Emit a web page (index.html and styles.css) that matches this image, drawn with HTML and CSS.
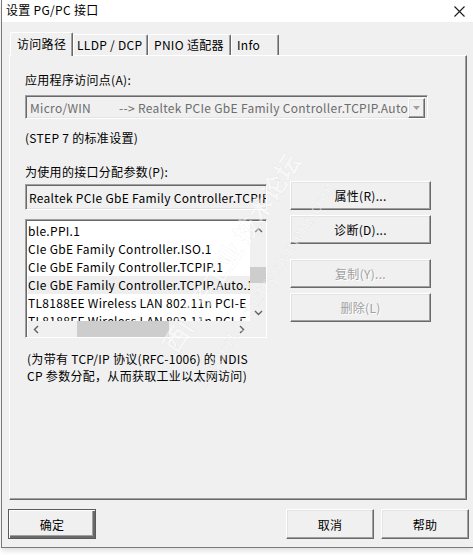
FILE: index.html
```html
<!DOCTYPE html>
<html lang="zh-CN">
<head>
<meta charset="utf-8">
<title>设置 PG/PC 接口</title>
<link rel="stylesheet" href="styles.css">
</head>
<body>
<div class="window">
  <div class="titlebar">
    <span class="title">设置 PG/PC 接口</span>
    <svg class="close" width="11" height="11" viewBox="0 0 11 11"><path d="M0.5 0.5 L10.5 10.5 M10.5 0.5 L0.5 10.5" stroke="#1a1a1a" stroke-width="1.1" fill="none"/></svg>
  </div>
  <div class="tabs">
    <div class="tab tab-active">访问路径</div>
    <div class="tab tab-lldp">LLDP / DCP</div>
    <div class="tab tab-pnio">PNIO 适配器</div>
    <div class="tab tab-info">Info</div>
  </div>
  <div class="panel">
    <div class="label">应用程序访问点(A):</div>
    <div class="combo sunken">
      <div class="combo-text"><span class="combo-a">Micro/WIN</span>--&gt; Realtek PCIe GbE Family Controller.TCPIP.Auto.1</div>
      <div class="combo-btn raised">
        <svg width="7" height="4" viewBox="0 0 7 4"><path d="M0 0 H7 L3.5 4 Z" fill="#a0a0a0"/></svg>
      </div>
    </div>
    <div class="label label-step">(STEP 7 的标准设置)</div>
    <div class="label label-param">为使用的接口分配参数(P):</div>
    <div class="params">
      <div class="params-left">
        <div class="textbox sunken">Realtek PCIe GbE Family Controller.TCPIP.Auto.1</div>
        <div class="list sunken">
          <div class="list-items">
            <div class="item">ble.PPI.1</div>
            <div class="item">CIe GbE Family Controller.ISO.1</div>
            <div class="item">CIe GbE Family Controller.TCPIP.1</div>
            <div class="item item-selected">CIe GbE Family Controller.TCPIP.Auto.1</div>
            <div class="item">TL8188EE Wireless LAN 802.11n PCI-E NIC.TCPIP.1</div>
            <div class="item">TL8188EE Wireless LAN 802.11n PCI-E NIC.TCPIP.Auto.1</div>
          </div>
          <div class="vscroll">
            <div class="sb-btn"><svg width="9" height="6" viewBox="0 0 9 6"><path d="M1 5 L4.5 1.5 L8 5" stroke="#606060" stroke-width="1.4" fill="none"/></svg></div>
            <div class="vtrack"><div class="vthumb"></div></div>
            <div class="sb-btn"><svg width="9" height="6" viewBox="0 0 9 6"><path d="M1 1 L4.5 4.5 L8 1" stroke="#606060" stroke-width="1.4" fill="none"/></svg></div>
          </div>
          <div class="hscroll">
            <div class="sb-btn"><svg width="6" height="9" viewBox="0 0 6 9"><path d="M5 1 L1.5 4.5 L5 8" stroke="#606060" stroke-width="1.4" fill="none"/></svg></div>
            <div class="htrack"><div class="hthumb"></div></div>
            <div class="sb-btn"><svg width="6" height="9" viewBox="0 0 6 9"><path d="M1 1 L4.5 4.5 L1 8" stroke="#606060" stroke-width="1.4" fill="none"/></svg></div>
          </div>
          <div class="corner"></div>
        </div>
      </div>
      <div class="params-right">
        <div class="btn raised btn-side">属性(R)...</div>
        <div class="btn raised btn-side gap-s">诊断(D)...</div>
        <div class="btn raised btn-side gap-l disabled">复制(Y)...</div>
        <div class="btn raised btn-side gap-s disabled">删除(L)</div>
      </div>
    </div>
    <div class="note">
      <div>(为带有 TCP/IP 协议(RFC-1006) 的 NDIS</div>
      <div>CP 参数分配，从而获取工业以太网访问)</div>
    </div>
  </div>
  <div class="footer">
    <div class="btn raised btn-foot btn-default">确定</div>
    <div class="btn raised btn-foot btn-cancel">取消</div>
    <div class="btn raised btn-foot btn-help">帮助</div>
  </div>
  <div class="watermark wm-big">西门子工业 技术论坛</div>
  <div class="watermark wm-url">support.industry.siemens.com</div>
</div>
</body>
</html>
```
FILE: styles.css
```css
* { box-sizing: border-box; }
html, body { margin: 0; padding: 0; background: #ffffff; }
body {
  width: 473px;
  height: 555px;
  overflow: hidden;
  font-family: "Noto Sans CJK SC", "Noto Sans", sans-serif;
  font-size: 12px;
  letter-spacing: 0.3px;
  color: #000;
}
.window {
  position: relative;
  margin-left: 1px;
  width: 472px;
  height: 548px;
  border-left: 1px solid #7a7a7a;
  border-bottom: 1px solid #7a7a7a;
  background: #f0f0f0;
  box-shadow: 0 3px 5px rgba(0,0,0,0.12);
}
.titlebar {
  height: 22px;
  background: #ffffff;
  display: flex;
  align-items: center;
  justify-content: space-between;
  padding: 0 8px 2px 4px;
}
.title { font-size: 12px; line-height: 18px; color: #000; }
.close { display: block; margin-top: 2px; }

.tabs {
  height: 33px;
  display: flex;
  align-items: flex-end;
  padding-left: 8px;
}
.tab {
  height: 21px;
  line-height: 19px;
  border-top: 1px solid #ffffff;
  border-left: 1px solid #ffffff;
  border-right: 1px solid #696969;
  box-shadow: inset -1px 0 #a0a0a0;
  border-radius: 2px 2px 0 0;
  white-space: nowrap;
  padding-left: 5px;
  background: #f0f0f0;
}
.tab-active {
  position: relative;
  z-index: 1;
  width: 63px;
  height: 24px;
  line-height: 21px;
  margin-bottom: -1px;
  padding-left: 6px;
}
.tab-lldp { width: 75px; padding-left: 3px; }
.tab-pnio { width: 83px; padding-left: 5px; }
.tab-info { width: 48px; padding-left: 5px; }

.panel {
  margin-left: 7px;
  width: 458px;
  height: 445px;
  border-top: 1px solid #ffffff;
  border-left: 1px solid #ffffff;
  border-right: 1px solid #696969;
  border-bottom: 1px solid #696969;
  box-shadow: inset -1px -1px #a0a0a0;
  padding: 15px 0 0 15px;
}
.label { height: 18px; line-height: 18px; white-space: nowrap; }
.label-step { margin-top: 10px; }
.label-param { margin-top: 16px; }

.sunken {
  border: 1px solid;
  border-color: #a0a0a0 #ffffff #ffffff #a0a0a0;
  box-shadow: inset 1px 1px #696969, inset -1px -1px #e3e3e3;
}
.raised {
  border: 1px solid;
  border-color: #ffffff #696969 #696969 #ffffff;
  box-shadow: inset -1px -1px #a0a0a0, inset 1px 1px #e3e3e3;
  background: #f0f0f0;
}

.combo {
  margin-top: 6px;
  width: 403px;
  height: 24px;
  display: flex;
  padding: 2px 2px 2px 4px;
  background: #f0f0f0;
}
.combo-text {
  flex: 1;
  overflow: hidden;
  white-space: nowrap;
  color: #6d6d6d;
  line-height: 20px;
}
.combo-a { display: inline-block; width: 89px; }
.combo-btn {
  width: 17px;
  height: 20px;
  display: flex;
  align-items: center;
  justify-content: center;
}
.combo-btn svg { display: block; }

.params {
  display: flex;
  gap: 23px;
}
.params-left { width: 242px; }
.textbox {
  margin-top: 3px;
  width: 242px;
  height: 26px;
  padding: 2px 0 2px 3px;
  line-height: 22px;
  white-space: nowrap;
  overflow: hidden;
  background: #f0f0f0;
}
.list {
  margin-top: 9px;
  width: 242px;
  height: 119px;
  padding: 2px;
  background: #ffffff;
  display: grid;
  grid-template-columns: 222px 16px;
  grid-template-rows: 99px 16px;
}
.list-items {
  overflow: hidden;
  grid-column: 1;
  grid-row: 1;
}
.item {
  height: 18px;
  line-height: 18px;
  white-space: nowrap;
}
.item-selected { background: #eeeeee; }
.vscroll {
  grid-column: 2;
  grid-row: 1;
  display: flex;
  flex-direction: column;
  background: #f0f0f0;
}
.hscroll {
  grid-column: 1;
  grid-row: 2;
  display: flex;
  background: #f0f0f0;
}
.corner { grid-column: 2; grid-row: 2; background: #f0f0f0; }
.sb-btn {
  width: 16px;
  height: 16px;
  flex: none;
  display: flex;
  align-items: center;
  justify-content: center;
}
.sb-btn svg { display: block; }
.vtrack { flex: 1; padding-top: 29px; }
.vthumb { width: 16px; height: 16px; background: #cdcdcd; }
.htrack { flex: 1; padding-left: 33px; }
.hthumb { width: 92px; height: 16px; background: #cdcdcd; }

.params-right { width: 141px; }
.btn {
  display: flex;
  align-items: center;
  justify-content: center;
  white-space: nowrap;
}
.btn-side { width: 141px; height: 29px; }
.gap-s { margin-top: 5px; }
.gap-l { margin-top: 15px; }
.disabled { color: #a0a0a0; text-shadow: 1px 1px #ffffff; }

.note {
  margin-top: 12px;
  line-height: 17px;
  padding-left: 2px;
  white-space: nowrap;
}

.footer {
  display: flex;
  margin-top: 9px;
  padding-left: 6px;
}
.btn-foot { width: 88px; height: 30px; }
.btn-default {
  border-color: #5a5a5a;
  box-shadow: inset 1px 1px #ffffff, inset -2px -2px #696969, inset -3px -3px #a0a0a0;
}
.btn-cancel { margin-left: auto; }
.btn-help { margin-left: 7px; margin-right: 4px; }

.watermark {
  position: absolute;
  white-space: nowrap;
  letter-spacing: 0;
  color: rgba(255,255,255,0.5);
  -webkit-text-stroke: 0.6px rgba(0,0,0,0.07);
  transform: translate(-50%, -50%) rotate(-57deg);
  pointer-events: none;
}
.wm-big { left: 228px; top: 252px; font-size: 25px; font-weight: bold; }
.wm-url { left: 262px; top: 284px; font-size: 17px; }
```
